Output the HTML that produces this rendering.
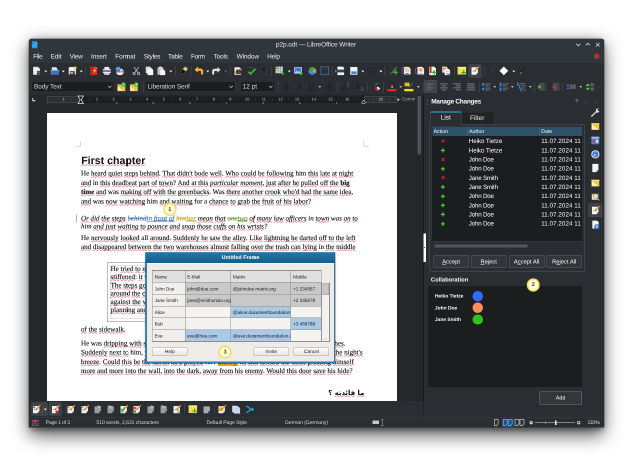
<!DOCTYPE html><html><head><meta charset="utf-8"><title>p2p.odt — LibreOffice Writer</title><style>
html,body{margin:0;padding:0;background:#fff;}
body{text-rendering:geometricPrecision;width:640px;height:473px;overflow:hidden;position:relative;font-family:"Liberation Sans",sans-serif;}
#st{will-change:transform;position:absolute;left:0;top:0;width:1280px;height:946px;transform:scale(.5);transform-origin:0 0;}
#st div,#st svg{position:absolute;}
#st div div{position:absolute}
.t{white-space:nowrap;font-family:"Liberation Sans",sans-serif;}
.d{white-space:nowrap;font-family:"Liberation Serif",serif;color:#0a0a0a;-webkit-text-stroke-width:.18px;}
.d u,.h1 u,.ar u{text-decoration:underline wavy #e8202a;text-decoration-thickness:1.25px;text-underline-offset:.4px;text-decoration-skip-ink:none}
.h1{white-space:nowrap;font-family:"Liberation Sans",sans-serif;font-weight:bold;color:#111;}
.ar{white-space:nowrap;font-family:"DejaVu Sans","Liberation Sans",sans-serif;font-weight:bold;color:#111;}
.c1{color:#3465b8}.c2{color:#c9a416}.c3{color:#5a9a1f}
.del{text-decoration:line-through}.ins{text-decoration:underline}
.del u,.ins u{text-decoration:inherit}
.hl{background:#ffd500}
.yc{border-radius:50%;background:#ffffd2;box-shadow:inset 0 0 0 2.6px #f8da62, 0 0 1.5px #f8da62;text-align:center;font-size:11px;font-weight:bold;color:#3a3a3a;font-family:"Liberation Sans",sans-serif;}
#win{left:58px;top:78px;width:1150px;height:776px;background:#2a2e32;border-radius:5px 5px 0 0;box-shadow:0 0 0 1px rgba(20,22,24,.5);}
#sh{left:63px;top:80px;width:1140px;height:774px;border-radius:5px 5px 0 0;box-shadow:0 12px 36px 4px rgba(0,0,0,.66), 0 3px 12px 3px rgba(0,0,0,.38);}
</style></head><body><div id="st"><div id="sh"></div><div id="win"></div>
<div style="left:58px;top:78px;width:1150px;height:47.8px;background:#31363b;border-radius:5px 5px 0 0"></div><svg class="i" style="left:62.1px;top:81.7px;" width="15" height="15" viewBox="0 0 16 16"><path d="M2 0.500h8l4 4V15.500H2z" fill="#1e9be8"/><path d="M10 .5v4h4z" fill="#8fd0fa"/><path d="M4.500 7h7M4.500 9.500h7M4.500 12h5" stroke="#5fbaf2" stroke-width="1"/></svg><div class="t" style="left:551.8px;top:80.95px;font-size:13px;line-height:16.9px;color:#e6e7e8;letter-spacing:-0.14px;">p2p.odt — LibreOffice Writer</div><svg class="i" style="left:1149.9px;top:82.7px;" width="13" height="13" viewBox="0 0 16 16"><path d="M3 5.500l5 5 5-5" fill="none" stroke="#fcfcfc" stroke-width="1.600"/></svg><svg class="i" style="left:1169.3px;top:82.3px;" width="13" height="13" viewBox="0 0 16 16"><path d="M3 10.500l5-5 5 5" fill="none" stroke="#fcfcfc" stroke-width="1.600"/></svg><svg class="i" style="left:1188.5px;top:82.5px;" width="13" height="13" viewBox="0 0 16 16"><path d="M3.500 3.500l9 9M12.500 3.500l-9 9" fill="none" stroke="#fcfcfc" stroke-width="1.600"/></svg><div class="t" style="left:66.6px;top:104.95px;font-size:13px;line-height:16.9px;color:#eeeff0;letter-spacing:-0.78px;">File</div><div class="t" style="left:101.5px;top:104.95px;font-size:13px;line-height:16.9px;color:#eeeff0;letter-spacing:-0.3px;">Edit</div><div class="t" style="left:139.2px;top:104.95px;font-size:13px;line-height:16.9px;color:#eeeff0;letter-spacing:-0.51px;">View</div><div class="t" style="left:182px;top:104.95px;font-size:13px;line-height:16.9px;color:#eeeff0;letter-spacing:-0.18px;">Insert</div><div class="t" style="left:230.6px;top:104.95px;font-size:13px;line-height:16.9px;color:#eeeff0;letter-spacing:-0.25px;">Format</div><div class="t" style="left:287.8px;top:104.95px;font-size:13px;line-height:16.9px;color:#eeeff0;letter-spacing:-0.48px;">Styles</div><div class="t" style="left:336px;top:104.95px;font-size:13px;line-height:16.9px;color:#eeeff0;letter-spacing:-0.37px;">Table</div><div class="t" style="left:382px;top:104.95px;font-size:13px;line-height:16.9px;color:#eeeff0;letter-spacing:-0.78px;">Form</div><div class="t" style="left:427.6px;top:104.95px;font-size:13px;line-height:16.9px;color:#eeeff0;letter-spacing:-0.49px;">Tools</div><div class="t" style="left:473.2px;top:104.95px;font-size:13px;line-height:16.9px;color:#eeeff0;letter-spacing:-0.29px;">Window</div><div class="t" style="left:534.2px;top:104.95px;font-size:13px;line-height:16.9px;color:#eeeff0;letter-spacing:-0.31px;">Help</div><svg class="i" style="left:1187.1px;top:106.1px;" width="13" height="13" viewBox="0 0 16 16"><circle cx="8" cy="8" r="6" fill="#d8353f"/><path d="M5.500 5.500l5 5M10.500 5.500l-5 5" stroke="#7d1a20" stroke-width="1.500"/></svg><div style="left:58px;top:125.8px;width:1150px;height:62.8px;background:#2a2e32"></div><div style="left:936.6px;top:129.2px;width:26px;height:25.6px;background:#3d4247;border-radius:3px;box-shadow:inset 0 0 0 1px #50555a"></div><svg class="i" style="left:63.9px;top:132.1px;" width="19.4" height="19.4" viewBox="0 0 16 16"><path d="M2 1.5h8l3 3v10h-11z" fill="#f4f4f4"/><path d="M10 1.5v3h3z" fill="#c9c9c9"/><rect x="2" y="1.500" width="8" height="2" fill="#cfe3f7"/><rect x="8" y="8" width="5" height="6" fill="#2b2f33"/><rect x="9" y="9.5" width="3" height="1.3" fill="#f7d847"/></svg><svg class="i" style="left:99.5px;top:132.1px;" width="19.4" height="19.4" viewBox="0 0 16 16"><path d="M3 2h7l2 2v5H3z" fill="#e9e9e9"/><path d="M1 6.5h14v8H1z" fill="#3f73c4"/><path d="M1 6.5h14v1.6H1z" fill="#7aa7e6"/></svg><svg class="i" style="left:134.9px;top:132.1px;" width="19.4" height="19.4" viewBox="0 0 16 16"><path d="M2 2h12v12H2z" fill="#e6e6e6"/><rect x="4" y="8.5" width="8" height="5.5" fill="#3c4045"/><rect x="5" y="10" width="4" height="2.6" fill="#d0d0d0"/><rect x="4" y="2" width="7" height="4" fill="#fbfbfb"/><circle cx="12.5" cy="3.2" r="2.4" fill="#f7d847"/></svg><svg class="i" style="left:178.3px;top:132.1px;" width="19.4" height="19.4" viewBox="0 0 16 16"><path d="M2 1h9l3 3v11H2z" fill="#d42218"/><path d="M11 1v3h3z" fill="#f6a09a"/><path d="M10.5 2.5L6.5 8.5h2.6L6 14.5l6.4-7.6H9.6z" fill="#f9d648"/></svg><svg class="i" style="left:203.5px;top:132.1px;" width="19.4" height="19.4" viewBox="0 0 16 16"><rect x="4" y="1.5" width="8" height="4" fill="#f1f1f1"/><rect x="1.5" y="5" width="13" height="7" rx="1" fill="#e2e2e2"/><rect x="1.5" y="7" width="13" height="2.6" fill="#8c45b4"/><rect x="4" y="10.5" width="8" height="4.2" fill="#fbfbfb"/><path d="M5 12h6M5 13.4h6" stroke="#9a9a9a" stroke-width=".7"/></svg><svg class="i" style="left:228.9px;top:132.1px;" width="19.4" height="19.4" viewBox="0 0 16 16"><rect x="5" y="4.5" width="8" height="3" fill="#f1f1f1"/><rect x="2.5" y="7" width="13" height="5.5" rx="1" fill="#dcdcdc"/><rect x="2.5" y="8.6" width="13" height="2" fill="#8c45b4"/><rect x="5" y="11" width="8" height="3.8" fill="#fbfbfb"/><circle cx="6" cy="5.3" r="4.2" fill="#3d86d8"/><path d="M3 4.2c2 1 4-1.2 5.8.4" stroke="#a7d2ff" stroke-width="1.1" fill="none"/><path d="M9 8.6l3 3" stroke="#d5d5d5" stroke-width="1.6"/></svg><svg class="i" style="left:262.9px;top:132.1px;" width="19.4" height="19.4" viewBox="0 0 16 16"><path d="M4 1.5L10.8 11M12 1.5L5.2 11" stroke="#c9cbcd" stroke-width="1.2" fill="none"/><circle cx="4.2" cy="12.6" r="1.9" fill="none" stroke="#c9cbcd" stroke-width="1.2"/><circle cx="11.8" cy="12.6" r="1.9" fill="none" stroke="#c9cbcd" stroke-width="1.2"/></svg><svg class="i" style="left:288.7px;top:132.1px;" width="19.4" height="19.4" viewBox="0 0 16 16"><path d="M2 1h7l2 2v9H2z" fill="#d9d9d9"/><path d="M5 4h7l2.4 2.4V15H5z" fill="#f6f6f6"/></svg><svg class="i" style="left:312.9px;top:132.1px;" width="19.4" height="19.4" viewBox="0 0 16 16"><rect x="1.5" y="2.5" width="10" height="12" rx="1" fill="#bdbfc1"/><rect x="4" y="1" width="5" height="3" rx=".8" fill="#e9e9e9"/><path d="M6 6h6l2.4 2.4V15H6z" fill="#f7f7f7"/></svg><svg class="i" style="left:357.5px;top:132.1px;" width="19.4" height="19.4" viewBox="0 0 16 16"><path d="M9.5 1.2l5 4.2-3.6 3.4-4.8-4z" fill="#e6c98a"/><path d="M6 4.8l4.9 4-5.2 5.6-4.4-3.6z" fill="#15171a" stroke="#6b6f73" stroke-width=".6"/><path d="M11 .8l4 3.5" stroke="#c58d2d" stroke-width="1.2"/></svg><svg class="i" style="left:387.9px;top:132.1px;" width="19.4" height="19.4" viewBox="0 0 16 16"><path d="M1 6.2L6.4 1.6v3h4.2c2.6 0 4.4 1.8 4.4 4.4V14h-3.4V9.6c0-.9-.5-1.4-1.4-1.4H6.4v3z" fill="#f5b11c"/><path d="M1 6.2L6.4 1.6v3h4.2c2.6 0 4.4 1.8 4.4 4.4" fill="none" stroke="#ffe08a" stroke-width=".6"/></svg><svg class="i" style="left:422.9px;top:132.1px;" width="19.4" height="19.4" viewBox="0 0 16 16"><path d="M15 6.2L9.6 1.6v3H5.4C2.8 4.6 1 6.400 1 9V14h3.400V9.600c0-.9.500-1.400 1.400-1.400H9.600v3z" fill="#dfe1e3"/></svg><svg class="i" style="left:466.3px;top:132.1px;" width="19.4" height="19.4" viewBox="0 0 16 16"><path d="M2.500 2h8l3 3v9.500h-11z" fill="#f1eee6"/><circle cx="7" cy="10.500" r="2.700" fill="#2a2320"/><circle cx="11.500" cy="10.500" r="2.700" fill="#2a2320"/><circle cx="7" cy="10.500" r="1.200" fill="#c0691f"/><circle cx="11.500" cy="10.500" r="1.200" fill="#c0691f"/><path d="M6 5.500h3l1 2.500H5z" fill="#4a3a30"/><path d="M10 5.500h2.500l1 2.500H9.500z" fill="#4a3a30"/></svg><svg class="i" style="left:494.1px;top:132.1px;" width="19.4" height="19.4" viewBox="0 0 16 16"><path d="M2.500 9.500l3.500 3.700L14 4.200" fill="none" stroke="#3cc43c" stroke-width="2.600"/><path d="M3 2.200h7" stroke="#8a8d90" stroke-width=".8" stroke-dasharray="1.600 1"/></svg><svg class="i" style="left:519.5px;top:132.1px;" width="19.4" height="19.4" viewBox="0 0 16 16"><path d="M6 2h7v1.800h-1.400V14H10V3.800H8.800V14H7.200V8.600C4.800 8.600 3.400 7.200 3.400 5.300S4.800 2 6 2z" fill="#121416" stroke="#565a5e" stroke-width=".5"/></svg><svg class="i" style="left:549.9px;top:132.1px;" width="19.4" height="19.4" viewBox="0 0 16 16"><rect x="1" y="1" width="12" height="11" fill="#d7d9db"/><path d="M1 4.500h12M1 8h12M5 1v11M9 1v11" stroke="#7d8185" stroke-width=".8"/><rect x="1" y="1" width="4" height="3.500" fill="#7db35c"/><path d="M11.500 8v3.500H9l3.500 4 3.500-4h-2.500V8z" fill="#2fb52f"/></svg><svg class="i" style="left:586.9px;top:132.1px;" width="19.4" height="19.4" viewBox="0 0 16 16"><rect x="1" y="2" width="13" height="10.500" fill="#e9e9e9"/><rect x="2" y="3" width="11" height="8.500" fill="#3e7fd6"/><path d="M2 11.500l3.500-4 2.500 2.500 2-1.800 3 3.300z" fill="#9ccdf7"/><path d="M11.500 8.500V12H9l3.500 3.800L16 12h-2.500V8.500z" fill="#2fb52f"/></svg><svg class="i" style="left:614.9px;top:132.1px;" width="19.4" height="19.4" viewBox="0 0 16 16"><circle cx="8" cy="8.500" r="6.500" fill="#3a78c9"/><path d="M8 8.500L3 4.200A6.500 6.500 0 0 1 12.300 3.600z" fill="#35b035"/><path d="M8 8.500l4.300-4.900A6.500 6.500 0 0 1 13.500 12z" fill="#f08a2c"/><path d="M1.700 10h12.600" stroke="#8db9ea" stroke-width="1"/></svg><svg class="i" style="left:640.3px;top:132.1px;" width="19.4" height="19.4" viewBox="0 0 16 16"><rect x="1.500" y="1.500" width="13" height="13" fill="#2a2e32" stroke="#4a86d8" stroke-width="1"/><path d="M4.500 4h7v2h-1V5.200H8.800v6H10V12H6v-.8h1.200v-6H5.500V6h-1z" fill="#15171a" stroke="#5d6165" stroke-width=".4"/></svg><svg class="i" style="left:670.3px;top:132.1px;" width="19.4" height="19.4" viewBox="0 0 16 16"><path d="M4 1h9l2 2v3H4z" fill="#f4f4f4"/><rect x="4" y="10.500" width="11" height="4.500" fill="#f4f4f4"/><path d="M2 8.300h13" stroke="#3b8be0" stroke-width="1.300" stroke-dasharray="2.200 1"/><path d="M0 5.800l3.600 2.500L0 10.800z" fill="#3b8be0"/></svg><svg class="i" style="left:698.3px;top:132.1px;" width="19.4" height="19.4" viewBox="0 0 16 16"><rect x="2" y="1.500" width="12" height="13" fill="#e4e4e4"/><rect x="3.500" y="3" width="9" height="4" fill="#fbfbfb"/><rect x="4" y="9" width="8.500" height="4" fill="#3b7fe6"/></svg><svg class="i" style="left:734.3px;top:132.1px;" width="19.4" height="19.4" viewBox="0 0 16 16"><path d="M2.500 13.500h4v-1.700C4.800 10.800 3.900 9.300 3.900 7.400 3.900 4.900 5.500 3.200 8 3.200s4.100 1.700 4.100 4.200c0 1.900-.9 3.400-2.600 4.400v1.700h4" fill="none" stroke="#15171a" stroke-width="1.700"/><path d="M2.500 13.500h4v-1.700C4.800 10.800 3.900 9.300 3.900 7.400 3.900 4.900 5.500 3.200 8 3.200s4.100 1.700 4.100 4.200c0 1.900-.9 3.400-2.600 4.400v1.700h4" fill="none" stroke="#4d5155" stroke-width=".5"/></svg><svg class="i" style="left:777.5px;top:132.1px;" width="19.4" height="19.4" viewBox="0 0 16 16"><path d="M2 13.500C5 12 8 8 12.500 1.500" stroke="#7f8387" stroke-width="1.600" fill="none"/><path d="M3 12.500c3.500-.5 6-3 9-9" stroke="#44484c" stroke-width="1" fill="none"/><path d="M11.500 8v3H8.500v2h3v3h2v-3h3v-2h-3V8z" fill="#2fb52f" transform="translate(-1.500 -1.500)"/></svg><svg class="i" style="left:802.9px;top:132.1px;" width="19.4" height="19.4" viewBox="0 0 16 16"><path d="M4 1.500h8l3 3V14H4z" fill="#f1f1f1"/><rect x="6" y="4" width="7" height="5.500" fill="#f08a2c" opacity=".8"/><path d="M6 5.300h7M6 6.800h7M6 8.300h7" stroke="#f7f7f7" stroke-width=".6"/><path d="M5 2.500H2.300C1.400 2.500 1 3 1 4v7c0 1 .4 1.500 1.300 1.500H5" fill="none" stroke="#7b57c9" stroke-width="1.300"/><rect x="7" y="11.500" width="5" height="2" fill="#3b7fe6"/></svg><svg class="i" style="left:830.3px;top:132.1px;" width="19.4" height="19.4" viewBox="0 0 16 16"><path d="M4 1.500h8l3 3V14H4z" fill="#f1f1f1"/><rect x="6.500" y="4" width="6" height="5" fill="#f3a25a"/><path d="M5 3.500H2.300C1.400 3.500 1 4 1 5v6c0 1 .4 1.500 1.300 1.500H5" fill="none" stroke="#7b57c9" stroke-width="1.300"/><rect x="7" y="11.800" width="5" height="1.600" fill="#8db2ee"/></svg><svg class="i" style="left:855.1px;top:132.1px;" width="19.4" height="19.4" viewBox="0 0 16 16"><path d="M3 1h8l3 3v11H3z" fill="#f4f4f4"/><rect x="4" y="0.500" width="2.600" height="11" fill="#d32218"/><path d="M11.500 8v3H8.500v2h3v3h2v-3h3v-2h-3V8z" fill="#2fb52f" transform="translate(-1.500 -1.500)"/></svg><svg class="i" style="left:881.5px;top:132.1px;" width="19.4" height="19.4" viewBox="0 0 16 16"><path d="M2 1h7l2 2v8H2z" fill="#e1e1e1"/><rect x="3.500" y="3" width="5" height="4" fill="#f08a2c"/><path d="M6 5h7l2 2v8H6z" fill="#f7f7f7"/><rect x="8" y="8" width="5" height="2" fill="#c9c9c9"/><path d="M9 12.500l4 2" stroke="#7b57c9" stroke-width="1.500"/><circle cx="13.500" cy="13.500" r="1.600" fill="#3b7fe6"/></svg><svg class="i" style="left:914.3px;top:132.1px;" width="19.4" height="19.4" viewBox="0 0 16 16"><rect x="1" y="1.500" width="14" height="12.500" fill="#f9de55"/><rect x="1" y="1.500" width="14" height="2" fill="#fff09a"/><path d="M11.500 8v3H8.500v2h3v3h2v-3h3v-2h-3V8z" fill="#2fb52f" transform="translate(-1.500 -1.200)"/></svg><svg class="i" style="left:939.9px;top:132.1px;" width="19.4" height="19.4" viewBox="0 0 16 16"><path d="M2.500 2h10.500v9l-3 3.500H2.500z" fill="#f7f7f7"/><path d="M13 11h-3v3.500z" fill="#cfcfcf"/><path d="M4 8.500h6" stroke="#e35d1d" stroke-width="1"/><path d="M8.5 7.5L14.2 1.5" stroke="#f08a2c" stroke-width="2.2" stroke-linecap="round"/><path d="M7.3 8.7l2.2 -.6l-1.6 -1.6z" fill="#5a4020"/></svg><svg class="i" style="left:973.1px;top:132.1px;" width="19.4" height="19.4" viewBox="0 0 16 16"><path d="M2 14L14 2" stroke="#3f4347" stroke-width="1.100"/></svg><svg class="i" style="left:998.3px;top:132.1px;" width="19.4" height="19.4" viewBox="0 0 16 16"><path d="M8 .8L15.200 8 8 15.200.8 8z" fill="#fafafa"/></svg><svg class="i" style="left:1036.3px;top:132.1px;" width="19.4" height="19.4" viewBox="0 0 16 16"><path d="M13.500 1.500L5 11" stroke="#15171a" stroke-width="2.200"/><path d="M14 2L5.500 11.500" stroke="#5b5f63" stroke-width=".5"/><path d="M5.200 10.200L2 14l4.300-2.600z" fill="#e6c36a"/></svg><svg class="i" style="left:85.4px;top:135.8px;" width="13.2" height="13.2" viewBox="0 0 16 16"><path d="M4.5 6.5h7L8 10.5z" fill="#fcfcfc"/></svg><svg class="i" style="left:120.4px;top:135.8px;" width="13.2" height="13.2" viewBox="0 0 16 16"><path d="M4.5 6.5h7L8 10.5z" fill="#fcfcfc"/></svg><svg class="i" style="left:155.8px;top:135.8px;" width="13.2" height="13.2" viewBox="0 0 16 16"><path d="M4.5 6.5h7L8 10.5z" fill="#fcfcfc"/></svg><svg class="i" style="left:335.4px;top:135.8px;" width="13.2" height="13.2" viewBox="0 0 16 16"><path d="M4.5 6.5h7L8 10.5z" fill="#fcfcfc"/></svg><svg class="i" style="left:409.4px;top:135.8px;" width="13.2" height="13.2" viewBox="0 0 16 16"><path d="M4.5 6.5h7L8 10.5z" fill="#fcfcfc"/></svg><svg class="i" style="left:572.2px;top:135.8px;" width="13.2" height="13.2" viewBox="0 0 16 16"><path d="M4.5 6.5h7L8 10.5z" fill="#fcfcfc"/></svg><svg class="i" style="left:719.4px;top:135.8px;" width="13.2" height="13.2" viewBox="0 0 16 16"><path d="M4.5 6.5h7L8 10.5z" fill="#fcfcfc"/></svg><svg class="i" style="left:755.4px;top:135.8px;" width="13.2" height="13.2" viewBox="0 0 16 16"><path d="M4.5 6.5h7L8 10.5z" fill="#fcfcfc"/></svg><svg class="i" style="left:1021px;top:135.8px;" width="13.2" height="13.2" viewBox="0 0 16 16"><path d="M4.5 6.5h7L8 10.5z" fill="#fcfcfc"/></svg><svg class="i" style="left:445.4px;top:135.8px;" width="13.2" height="13.2" viewBox="0 0 16 16"><path d="M4.5 6.5h7L8 10.5z" fill="#6a6e72"/></svg><div style="left:169.6px;top:132px;width:1px;height:20px;background:#4b5055"></div><div style="left:255.4px;top:132px;width:1px;height:20px;background:#4b5055"></div><div style="left:350px;top:132px;width:1px;height:20px;background:#4b5055"></div><div style="left:383.4px;top:132px;width:1px;height:20px;background:#4b5055"></div><div style="left:461px;top:132px;width:1px;height:20px;background:#4b5055"></div><div style="left:543.4px;top:132px;width:1px;height:20px;background:#4b5055"></div><div style="left:664px;top:132px;width:1px;height:20px;background:#4b5055"></div><div style="left:769.4px;top:132px;width:1px;height:20px;background:#4b5055"></div><div style="left:907.6px;top:132px;width:1px;height:20px;background:#4b5055"></div><div style="left:967.6px;top:132px;width:1px;height:20px;background:#4b5055"></div><div style="left:62.8px;top:162.2px;width:165.2px;height:22px;background:#1b1e20;border-radius:3px;box-shadow:inset 0 0 0 1px #3a3e42"></div><div class="t" style="left:68px;top:164.95px;font-size:13px;line-height:16.9px;color:#d9dbdd;letter-spacing:-0.18px;">Body Text</div><svg class="i" style="left:213.9px;top:167.9px;" width="11" height="11" viewBox="0 0 16 16"><path d="M3 5.500l5 5 5-5" fill="none" stroke="#d5d7d9" stroke-width="1.700"/></svg><svg class="i" style="left:232.7px;top:163.7px;" width="19.4" height="19.4" viewBox="0 0 16 16"><path d="M1.500 4h10l3 3v8h-13z" fill="#f2c83a"/><path d="M2.500 6l9 8h-9z" fill="#fbf3cf"/><path d="M2.500 6l9 8" stroke="#b88a14" stroke-width=".7"/><circle cx="11.500" cy="4.500" r="3.800" fill="#2fb52f"/><path d="M9.600 4.500a2 2 0 0 1 3.600-1.100M13.400 4.600a2 2 0 0 1-3.600 1.100" stroke="#eaffea" stroke-width=".9" fill="none"/></svg><svg class="i" style="left:258.3px;top:163.7px;" width="19.4" height="19.4" viewBox="0 0 16 16"><path d="M1.500 4h10l3 3v8h-13z" fill="#f2c83a"/><path d="M2.500 6l9 8h-9z" fill="#fbf3cf"/><path d="M2.500 6l9 8" stroke="#b88a14" stroke-width=".7"/><circle cx="12" cy="4" r="3.600" fill="#2fb52f"/><path d="M10 4h4M12 2v4" stroke="#eaffea" stroke-width="1.200"/></svg><div style="left:286px;top:164px;width:1px;height:20px;background:#4b5055"></div><div style="left:290px;top:162.2px;width:180.8px;height:22px;background:#1b1e20;border-radius:3px;box-shadow:inset 0 0 0 1px #3a3e42"></div><div class="t" style="left:295.2px;top:164.95px;font-size:13px;line-height:16.9px;color:#d9dbdd;letter-spacing:-0.2px;">Liberation Serif</div><svg class="i" style="left:456.7px;top:167.9px;" width="11" height="11" viewBox="0 0 16 16"><path d="M3 5.500l5 5 5-5" fill="none" stroke="#d5d7d9" stroke-width="1.700"/></svg><div style="left:480px;top:162.2px;width:70px;height:22px;background:#1b1e20;border-radius:3px;box-shadow:inset 0 0 0 1px #3a3e42"></div><div class="t" style="left:485.2px;top:164.95px;font-size:13px;line-height:16.9px;color:#d9dbdd;letter-spacing:0.02px;">12 pt</div><svg class="i" style="left:535.9px;top:167.9px;" width="11" height="11" viewBox="0 0 16 16"><path d="M3 5.500l5 5 5-5" fill="none" stroke="#d5d7d9" stroke-width="1.700"/></svg><div style="left:847.6px;top:160.4px;width:26.4px;height:26px;background:#3d4247;border-radius:3px;box-shadow:inset 0 0 0 1px #50555a"></div><svg class="i" style="left:562.3px;top:163.7px;" width="19.4" height="19.4" viewBox="0 0 16 16"><path d="M4 2h5c2.200 0 3.500 1.100 3.500 2.900 0 1.300-.7 2.200-1.800 2.600 1.500.3 2.400 1.400 2.400 2.900 0 2.100-1.500 3.400-4 3.400H4v-1h1.200V3H4zM7.600 3v4h1c1.100 0 1.700-.8 1.700-2s-.6-2-1.700-2zM7.600 8v4.800h1.200c1.300 0 2-.9 2-2.400S10.100 8 8.800 8z" fill="#1e2124"/></svg><svg class="i" style="left:587.9px;top:163.7px;" width="19.4" height="19.4" viewBox="0 0 16 16"><path d="M7 2h5.500l-.2 1h-1.600L8.500 13H10l-.2 1H4.300l.2-1h1.600L8.300 3H6.800z" fill="#1e2124"/></svg><svg class="i" style="left:613.3px;top:163.7px;" width="19.4" height="19.4" viewBox="0 0 16 16"><path d="M3 2h4.500v1H6.300v6c0 1.700.7 2.500 2.100 2.500s2.300-.9 2.300-2.600V3H9.500V2H13v1h-1.200v6c0 2.300-1.300 3.500-3.600 3.500S4.200 11.400 4.200 9.100V3H3z" fill="#1e2124"/><rect x="2" y="14" width="12" height="1.200" fill="#1e2124"/></svg><svg class="i" style="left:650.3px;top:163.7px;" width="19.4" height="19.4" viewBox="0 0 16 16"><path d="M11.800 5.200C11.600 3.400 10.300 2.500 8.300 2.500 6.200 2.500 4.800 3.600 4.800 5.300c0 3.600 7 1.700 7 5.400 0 1.700-1.400 2.800-3.600 2.800S4.500 12.400 4.300 10.500" fill="none" stroke="#1e2124" stroke-width="1.500"/><rect x="1.500" y="7.600" width="13" height="1.300" fill="#1e2124"/></svg><svg class="i" style="left:681.1px;top:163.7px;" width="19.4" height="19.4" viewBox="0 0 16 16"><path d="M2 6l7 9M9 6l-7 9" stroke="#1e2124" stroke-width="1.600"/><path d="M11 3c0-1.300 3-1.300 3 .2 0 1.200-3 2-3 3.800h3.200" fill="none" stroke="#2c5fb4" stroke-width="1.200"/></svg><svg class="i" style="left:708.9px;top:163.7px;" width="19.4" height="19.4" viewBox="0 0 16 16"><path d="M2 2l7 9M9 2l-7 9" stroke="#1e2124" stroke-width="1.600"/><path d="M11 10c0-1.300 3-1.300 3 .2 0 1.200-3 2-3 3.800h3.200" fill="none" stroke="#2c5fb4" stroke-width="1.200"/></svg><svg class="i" style="left:742.9px;top:163.7px;" width="19.4" height="19.4" viewBox="0 0 16 16"><path d="M9 1.500l-3 8" stroke="#5a5e62" stroke-width="1.200"/><path d="M4 2.500h8" stroke="#5a5e62" stroke-width="1.200"/><path d="M10.500 7.500l4 3.500-4.500 4-4-3.500z" fill="#f3f3f3"/><path d="M8.300 9.500l4 3.500-2.300 2-4-3.500z" fill="#e0281e"/></svg><svg class="i" style="left:773.9px;top:163.7px;" width="19.4" height="19.4" viewBox="0 0 16 16"><path d="M2 10.500L8 .5l6 10h-2.600L8 4.500 4.600 10.500z" fill="#14161a"/><path d="M4.500 9.500L8 2.500l1.800 3.500z" fill="#d33"/><path d="M8 2.500l3.500 7H8.500z" fill="#8a4fc0"/><path d="M5.500 9.500h5l-1.200-2.500z" fill="#e8a21c"/><rect x=".5" y="11.500" width="15" height="3.800" fill="#e0281e"/></svg><svg class="i" style="left:807.9px;top:163.7px;" width="19.4" height="19.4" viewBox="0 0 16 16"><rect x="1" y="1" width="8" height="6" fill="#f3d21a"/><path d="M2.500 3h5M2.500 5h3" stroke="#8d7a10" stroke-width=".8"/><path d="M14.500 1.500L8 9" stroke="#3672c9" stroke-width="1.500"/><path d="M8 8.500l-1.500 2.300 2.400-1.300z" fill="#1d1d1d"/><rect x=".5" y="11.500" width="15" height="3.800" fill="#f5e600"/></svg><svg class="i" style="left:851.1px;top:163.7px;" width="19.4" height="19.4" viewBox="0 0 16 16"><path d="M1.500 3h13M1.500 6.300h8M1.500 9.600h13M1.500 12.900h8" stroke="#585c60" stroke-width="2.500"/></svg><svg class="i" style="left:877.5px;top:163.7px;" width="19.4" height="19.4" viewBox="0 0 16 16"><path d="M1.500 3h13M4 6.300h8M1.500 9.600h13M4 12.900h8" stroke="#585c60" stroke-width="2.500"/></svg><svg class="i" style="left:904.3px;top:163.7px;" width="19.4" height="19.4" viewBox="0 0 16 16"><path d="M1.500 3h13M6.500 6.300h8M1.500 9.600h13M6.500 12.900h8" stroke="#585c60" stroke-width="2.500"/></svg><svg class="i" style="left:932.3px;top:163.7px;" width="19.4" height="19.4" viewBox="0 0 16 16"><path d="M1.500 3h13M1.500 6.300h13M1.500 9.600h13M1.500 12.900h13" stroke="#585c60" stroke-width="2.500"/></svg><svg class="i" style="left:962.9px;top:163.7px;" width="19.4" height="19.4" viewBox="0 0 16 16"><path d="M6 3.200h9.500M6 6.200h7M6 10.200h9.500M6 13.200h7" stroke="#585c60" stroke-width="2.300"/><rect x=".8" y="2" width="3.600" height="4" fill="#3b7fe6"/><rect x=".8" y="9.500" width="3.600" height="4" fill="#3b7fe6"/></svg><svg class="i" style="left:997.5px;top:163.7px;" width="19.4" height="19.4" viewBox="0 0 16 16"><path d="M6 3.200h9.500M6 6.200h7M6 10.200h9.500M6 13.200h7" stroke="#585c60" stroke-width="2.300"/><rect x="1" y="1" width="3.200" height="6" fill="#3b7fe6"/><rect x="1" y="9" width="3.200" height="6" fill="#3b7fe6"/></svg><svg class="i" style="left:1033.1px;top:163.7px;" width="19.4" height="19.4" viewBox="0 0 16 16"><path d="M5 2.800h9.500M8 6.500h7.500M8 10h6M10.500 13.500h5" stroke="#585c60" stroke-width="2.300"/><path d="M2.200 .8v5.500M5.200 5.500v5.500M7.400 10.500v5" stroke="#3b7fe6" stroke-width="2.300"/></svg><svg class="i" style="left:1073.7px;top:163.7px;" width="19.4" height="19.4" viewBox="0 0 16 16"><rect x="4" y="1.500" width="11" height="13" fill="#4a4e52"/><rect x="11" y="1.500" width="4" height="13" fill="#3c4044"/><path d="M2 4.500l5.500 3.500L2 11.500z" fill="#4fc81f"/></svg><svg class="i" style="left:1101.1px;top:163.7px;" width="19.4" height="19.4" viewBox="0 0 16 16"><rect x="4" y="1.500" width="11" height="13" fill="#4a4e52"/><rect x="11" y="1.500" width="4" height="13" fill="#3c4044"/><path d="M8 4.500L2.500 8 8 11.500z" fill="#e0281e"/></svg><svg class="i" style="left:1133.1px;top:163.7px;" width="19.4" height="19.4" viewBox="0 0 16 16"><rect x="5.500" y="4" width="10" height="7.500" fill="#585c60"/><path d="M2.500 4v8" stroke="#3b7fe6" stroke-width="1.300"/><path d="M.5 6l2-3 2 3zM.5 10l2 3 2-3z" fill="#3b7fe6"/></svg><svg class="i" style="left:1169.5px;top:163.7px;" width="19.4" height="19.4" viewBox="0 0 16 16"><rect x="8.500" y="2" width="6.500" height="5" fill="#585c60"/><rect x="8.500" y="9" width="6.500" height="5" fill="#585c60"/><path d="M1 6.500L4.500 2 8 6.500zM1 9.500L4.500 14 8 9.500z" fill="#5fc12f"/></svg><svg class="i" style="left:633.4px;top:167.4px;" width="13.2" height="13.2" viewBox="0 0 16 16"><path d="M4.5 6.5h7L8 10.5z" fill="#c9cbcd"/></svg><svg class="i" style="left:794.8px;top:167.4px;" width="13.2" height="13.2" viewBox="0 0 16 16"><path d="M4.5 6.5h7L8 10.5z" fill="#c9cbcd"/></svg><svg class="i" style="left:830.4px;top:167.4px;" width="13.2" height="13.2" viewBox="0 0 16 16"><path d="M4.5 6.5h7L8 10.5z" fill="#c9cbcd"/></svg><svg class="i" style="left:982.8px;top:167.4px;" width="13.2" height="13.2" viewBox="0 0 16 16"><path d="M4.5 6.5h7L8 10.5z" fill="#c9cbcd"/></svg><svg class="i" style="left:1018.4px;top:167.4px;" width="13.2" height="13.2" viewBox="0 0 16 16"><path d="M4.5 6.5h7L8 10.5z" fill="#c9cbcd"/></svg><svg class="i" style="left:1054px;top:167.4px;" width="13.2" height="13.2" viewBox="0 0 16 16"><path d="M4.5 6.5h7L8 10.5z" fill="#c9cbcd"/></svg><svg class="i" style="left:1155px;top:167.4px;" width="13.2" height="13.2" viewBox="0 0 16 16"><path d="M4.5 6.5h7L8 10.5z" fill="#c9cbcd"/></svg><div style="left:556px;top:164px;width:1px;height:20px;background:#4b5055"></div><div style="left:674px;top:164px;width:1px;height:20px;background:#4b5055"></div><div style="left:735px;top:164px;width:1px;height:20px;background:#4b5055"></div><div style="left:766px;top:164px;width:1px;height:20px;background:#4b5055"></div><div style="left:845.6px;top:164px;width:1px;height:20px;background:#4b5055"></div><div style="left:958px;top:164px;width:1px;height:20px;background:#4b5055"></div><div style="left:1067.6px;top:164px;width:1px;height:20px;background:#4b5055"></div><div style="left:1125px;top:164px;width:1px;height:20px;background:#4b5055"></div><div class="t" style="left:1198.6px;top:164.3px;font-size:14px;line-height:18.2px;color:#44484c;transform:translateX(-50%);">»</div>
<div style="left:58px;top:189.2px;width:789px;height:613.2px;background:#25292c"></div><div style="left:94px;top:226px;width:700px;height:576.4px;background:#fff"></div><div style="left:150.8px;top:292px;width:10.8px;height:1px;background:#bcbcbc"></div><div style="left:160.6px;top:281.6px;width:1px;height:11.4px;background:#bcbcbc"></div><div style="left:727.2px;top:292px;width:10.8px;height:1px;background:#bcbcbc"></div><div style="left:727.2px;top:281.6px;width:1px;height:11.4px;background:#bcbcbc"></div><div class="h1" style="left:162.4px;top:307.6px;font-size:21.2px;line-height:28px"><u>First</u> <u>chapter</u></div><div class="d" style="left:162px;top:339.42px;font-size:14.04px;line-height:16.15px;">He <u>heard</u> <u>quiet</u> <u>steps</u> <u>behind</u>. <u>That</u> <u>didn't</u> <u>bode</u> <u>well</u>. <u>Who</u> <u>could</u> <u>be</u> <u>following</u> him <u>this</u> <u>late</u> <u>at</u> <u>night</u></div><div class="d" style="left:162px;top:357.82px;font-size:14.04px;line-height:16.15px;"><u>and</u> in <u>this</u> <u>deadbeat</u> <u>part</u> <u>of</u> <u>town</u>? <u>And</u> <u>at</u> <u>this</u> <i><u>particular</u> <u>moment</u></i>, <u>just</u> <u>after</u> <u>he</u> <u>pulled</u> <u>off</u> <u>the</u> <b><u>big</u></b></div><div class="d" style="left:162px;top:376.22px;font-size:14.04px;line-height:16.15px;"><b><u>time</u></b> <u>and</u> was <u>making</u> <u>off</u> <u>with</u> <u>the</u> <u>greenbacks</u>. Was <u>there</u> <u>another</u> <u>crook</u> <u>who'd</u> <u>had</u> <u>the</u> <u>same</u> <u>idea</u>,</div><div class="d" style="left:162px;top:394.62px;font-size:14.04px;line-height:16.15px;"><u>and</u> was <u>now</u> <u>watching</u> him <u>and</u> <u>waiting</u> for a <u>chance</u> <u>to</u> <u>grab</u> <u>the</u> <u>fruit</u> <u>of</u> <u>his</u> <u>labor</u>?</div><div style="left:153px;top:429.2px;width:1.2px;height:14.8px;background:#555"></div><div class="d" style="left:162px;top:428.82px;font-size:14.04px;line-height:16.15px;font-style:italic"><u>Or</u> <u>did</u> <u>the</u> <u>steps</u> <span class="c1 del"><u>behind</u></span><span class="c1 ins">in <u>front</u> <u>of</u></span> <span class="c2 del">him</span><span class="c2 ins"><u>her</u></span> <u>mean</u> <u>that</u> <span class="c3 del"><u>one</u></span><span class="c3 ins"><u>two</u></span> <u>of</u> <u>many</u> <u>law</u> <u>officers</u> in <u>town</u> was <u>on</u> <u>to</u></div><div class="d" style="left:162px;top:445.02px;font-size:14.04px;line-height:16.15px;font-style:italic">him <u>and</u> <u>just</u> <u>waiting</u> <u>to</u> <u>pounce</u> <u>and</u> <u>snap</u> <u>those</u> <u>cuffs</u> <u>on</u> <u>his</u> <u>wrists</u>?</div><div class="d" style="left:162px;top:467.82px;font-size:14.04px;line-height:16.15px;">He <u>nervously</u> <u>looked</u> all <u>around</u>. <u>Suddenly</u> <u>he</u> <u>saw</u> <u>the</u> <u>alley</u>. <u>Like</u> <u>lightning</u> <u>he</u> <u>darted</u> <u>off</u> <u>to</u> <u>the</u> <u>left</u></div><div class="d" style="left:162px;top:486.22px;font-size:14.04px;line-height:16.15px;"><u>and</u> <u>disappeared</u> <u>between</u> <u>the</u> <u>two</u> <u>warehouses</u> <u>almost</u> <u>falling</u> <u>over</u> <u>the</u> <u>trash</u> <u>can</u> <u>lying</u> in <u>the</u> <u>middle</u></div><div style="left:214.2px;top:524.8px;width:446px;height:118.8px;border:1px solid #7a7a7a;box-sizing:border-box;background:#fff"></div><div style="left:220px;top:530.6px;width:434.4px;height:107.2px;border:1px solid #c4c4c4;box-sizing:border-box"></div><div class="d" style="left:221.2px;top:530.02px;font-size:14.04px;line-height:16.15px;">He <u>tried</u> <u>to</u> <u>nervously</u> <u>tap</u> <u>his</u> <u>way</u> <u>along</u> in <u>the</u> <u>inky</u> <u>darkness</u> <u>and</u> <u>suddenly</u></div><div class="d" style="left:221.2px;top:546.42px;font-size:14.04px;line-height:16.15px;"><u>stiffened</u>: <u>it</u> was a <u>dead-end</u>, <u>he</u> <u>would</u> <u>have</u> <u>to</u> <u>go</u> <u>back</u> <u>the</u> <u>way</u> <u>he</u> <u>had</u> <u>come</u>.</div><div class="d" style="left:221.2px;top:562.82px;font-size:14.04px;line-height:16.15px;"><u>The</u> <u>steps</u> <u>got</u> <u>louder</u> <u>and</u> <u>louder</u>, <u>he</u> <u>saw</u> a <u>black</u> <u>outline</u> <u>of</u> a <u>figure</u> <u>coming</u></div><div class="d" style="left:221.2px;top:579.22px;font-size:14.04px;line-height:16.15px;"><u>around</u> <u>the</u> <u>corner</u>. <u>Is</u> <u>this</u> <u>the</u> <u>end</u> <u>of</u> <u>the</u> <u>line</u>? <u>he</u> <u>thought</u> <u>pressing</u> <u>himself</u> <u>back</u></div><div class="d" style="left:221.2px;top:595.62px;font-size:14.04px;line-height:16.15px;"><u>against</u> <u>the</u> <u>wall</u> <u>trying</u> <u>to</u> <u>make</u> <u>himself</u> <u>invisible</u> in <u>the</u> <u>dark</u>, was all <u>that</u></div><div class="d" style="left:221.2px;top:612.02px;font-size:14.04px;line-height:16.15px;"><u>planning</u> <u>and</u> <u>energy</u> <u>wasted</u>?</div><div class="d" style="left:162px;top:651.22px;font-size:14.04px;line-height:16.15px;"><u>of</u> <u>the</u> <u>sidewalk</u>.</div><div class="d" style="left:162px;top:679.02px;font-size:14.04px;line-height:16.15px;">He was <u>dripping</u> <u>with</u> <u>sweat</u> <u>now</u>, <u>cold</u> <u>and</u> <u>wet</u>, <u>he</u> <u>could</u> <u>smell</u> <u>the</u> <u>fear</u> <u>coming</u> <u>off</u> <u>his</u> <u>clothes</u>.</div><div class="d" style="left:162px;top:697.42px;font-size:14.04px;line-height:16.15px;"><u>Suddenly</u> <u>next</u> <u>to</u> him, <u>with</u> a <u>barely</u> <u>noticeable</u> <u>squeak</u>, a <u>door</u> <u>swung</u> <u>quietly</u> <u>to</u> <u>and</u> <u>fro</u> in <u>the</u> <u>night's</u></div><div class="d" style="left:162px;top:715.82px;font-size:14.04px;line-height:16.15px;"><u>breeze</u>. <u>Could</u> <u>this</u> <u>be</u> <u>the</u> <u>haven</u> <u>he'd</u> <u>prayed</u> for? <span class="hl"><u>Slowly</u></span> <u>he</u> <u>slid</u> <u>toward</u> <u>the</u> <u>door</u>, <u>pressing</u> <u>himself</u></div><div class="d" style="left:162px;top:734.22px;font-size:14.04px;line-height:16.15px;"><u>more</u> <u>and</u> <u>more</u> <u>into</u> <u>the</u> <u>wall</u>, <u>into</u> <u>the</u> <u>dark</u>, <u>away</u> <u>from</u> <u>his</u> <u>enemy</u>. <u>Would</u> <u>this</u> <u>door</u> <u>save</u> <u>his</u> <u>hide</u>?</div><div class="ar" dir="rtl" style="left:600px;top:773.2px;width:128.8px;font-size:13.8px;line-height:26px;text-align:right"><u>ما</u> <u>فائدته</u> ؟</div><div style="left:829.4px;top:189.2px;width:17.6px;height:613.2px;background:#25282b;border-left:1px solid #2f3337;box-sizing:border-box"></div><div style="left:835px;top:192px;width:6.8px;height:117.2px;background:#4f5357;border-radius:1.700px"></div>
<div style="left:94px;top:192.6px;width:700px;height:13.2px;background:#1b1e20;border-radius:0 3px 3px 0"></div><div style="left:94px;top:192.6px;width:66.6px;height:13.2px;background:#2c3034;box-shadow:inset 0 0 0 1px #54595e"></div><div style="left:727.72px;top:192.6px;width:66.28px;height:13.2px;background:#2c3034;box-shadow:inset 0 0 0 1px #54595e;border-radius:0 3px 3px 0"></div><svg class="i" style="left:63.4px;top:194.2px;" width="10" height="10" viewBox="0 0 16 16"><path d="M4 3v9h9" fill="none" stroke="#e0e2e4" stroke-width="3"/></svg><div class="t" style="left:127.24px;top:194.2px;font-size:8px;line-height:10px;color:#c9cbcd;transform:translateX(-50%);">1</div><div style="left:143.42px;top:198.4px;width:1px;height:1.8px;background:#6a6e72"></div><div style="left:135.18px;top:198.8px;width:0.8px;height:1px;background:#4a4e52"></div><div style="left:151.86px;top:198.8px;width:0.8px;height:1px;background:#4a4e52"></div><div style="left:176.78px;top:198.4px;width:1px;height:1.8px;background:#6a6e72"></div><div style="left:168.54px;top:198.8px;width:0.8px;height:1px;background:#4a4e52"></div><div style="left:185.22px;top:198.8px;width:0.8px;height:1px;background:#4a4e52"></div><div class="t" style="left:193.96px;top:194.2px;font-size:8px;line-height:10px;color:#c9cbcd;transform:translateX(-50%);">1</div><div style="left:210.14px;top:198.4px;width:1px;height:1.8px;background:#6a6e72"></div><div style="left:201.9px;top:198.8px;width:0.8px;height:1px;background:#4a4e52"></div><div style="left:218.58px;top:198.8px;width:0.8px;height:1px;background:#4a4e52"></div><div class="t" style="left:227.32px;top:194.2px;font-size:8px;line-height:10px;color:#c9cbcd;transform:translateX(-50%);">2</div><div style="left:243.5px;top:198.4px;width:1px;height:1.8px;background:#6a6e72"></div><div style="left:235.26px;top:198.8px;width:0.8px;height:1px;background:#4a4e52"></div><div style="left:251.94px;top:198.8px;width:0.8px;height:1px;background:#4a4e52"></div><div class="t" style="left:260.68px;top:194.2px;font-size:8px;line-height:10px;color:#c9cbcd;transform:translateX(-50%);">3</div><div style="left:276.86px;top:198.4px;width:1px;height:1.8px;background:#6a6e72"></div><div style="left:268.62px;top:198.8px;width:0.8px;height:1px;background:#4a4e52"></div><div style="left:285.3px;top:198.8px;width:0.8px;height:1px;background:#4a4e52"></div><div class="t" style="left:294.04px;top:194.2px;font-size:8px;line-height:10px;color:#c9cbcd;transform:translateX(-50%);">4</div><div style="left:310.22px;top:198.4px;width:1px;height:1.8px;background:#6a6e72"></div><div style="left:301.98px;top:198.8px;width:0.8px;height:1px;background:#4a4e52"></div><div style="left:318.66px;top:198.8px;width:0.8px;height:1px;background:#4a4e52"></div><div class="t" style="left:327.4px;top:194.2px;font-size:8px;line-height:10px;color:#c9cbcd;transform:translateX(-50%);">5</div><div style="left:343.58px;top:198.4px;width:1px;height:1.8px;background:#6a6e72"></div><div style="left:335.34px;top:198.8px;width:0.8px;height:1px;background:#4a4e52"></div><div style="left:352.02px;top:198.8px;width:0.8px;height:1px;background:#4a4e52"></div><div class="t" style="left:360.76px;top:194.2px;font-size:8px;line-height:10px;color:#c9cbcd;transform:translateX(-50%);">6</div><div style="left:376.94px;top:198.4px;width:1px;height:1.8px;background:#6a6e72"></div><div style="left:368.7px;top:198.8px;width:0.8px;height:1px;background:#4a4e52"></div><div style="left:385.38px;top:198.8px;width:0.8px;height:1px;background:#4a4e52"></div><div class="t" style="left:394.12px;top:194.2px;font-size:8px;line-height:10px;color:#c9cbcd;transform:translateX(-50%);">7</div><div style="left:410.3px;top:198.4px;width:1px;height:1.8px;background:#6a6e72"></div><div style="left:402.06px;top:198.8px;width:0.8px;height:1px;background:#4a4e52"></div><div style="left:418.74px;top:198.8px;width:0.8px;height:1px;background:#4a4e52"></div><div class="t" style="left:427.48px;top:194.2px;font-size:8px;line-height:10px;color:#c9cbcd;transform:translateX(-50%);">8</div><div style="left:443.66px;top:198.4px;width:1px;height:1.8px;background:#6a6e72"></div><div style="left:435.42px;top:198.8px;width:0.8px;height:1px;background:#4a4e52"></div><div style="left:452.1px;top:198.8px;width:0.8px;height:1px;background:#4a4e52"></div><div class="t" style="left:460.84px;top:194.2px;font-size:8px;line-height:10px;color:#c9cbcd;transform:translateX(-50%);">9</div><div style="left:477.02px;top:198.4px;width:1px;height:1.8px;background:#6a6e72"></div><div style="left:468.78px;top:198.8px;width:0.8px;height:1px;background:#4a4e52"></div><div style="left:485.46px;top:198.8px;width:0.8px;height:1px;background:#4a4e52"></div><div class="t" style="left:494.2px;top:194.2px;font-size:8px;line-height:10px;color:#c9cbcd;transform:translateX(-50%);">10</div><div style="left:510.38px;top:198.4px;width:1px;height:1.8px;background:#6a6e72"></div><div style="left:502.14px;top:198.8px;width:0.8px;height:1px;background:#4a4e52"></div><div style="left:518.82px;top:198.8px;width:0.8px;height:1px;background:#4a4e52"></div><div class="t" style="left:527.56px;top:194.2px;font-size:8px;line-height:10px;color:#c9cbcd;transform:translateX(-50%);">11</div><div style="left:543.74px;top:198.4px;width:1px;height:1.8px;background:#6a6e72"></div><div style="left:535.5px;top:198.8px;width:0.8px;height:1px;background:#4a4e52"></div><div style="left:552.18px;top:198.8px;width:0.8px;height:1px;background:#4a4e52"></div><div class="t" style="left:560.92px;top:194.2px;font-size:8px;line-height:10px;color:#c9cbcd;transform:translateX(-50%);">12</div><div style="left:577.1px;top:198.4px;width:1px;height:1.8px;background:#6a6e72"></div><div style="left:568.86px;top:198.8px;width:0.8px;height:1px;background:#4a4e52"></div><div style="left:585.54px;top:198.8px;width:0.8px;height:1px;background:#4a4e52"></div><div class="t" style="left:594.28px;top:194.2px;font-size:8px;line-height:10px;color:#c9cbcd;transform:translateX(-50%);">13</div><div style="left:610.46px;top:198.4px;width:1px;height:1.8px;background:#6a6e72"></div><div style="left:602.22px;top:198.8px;width:0.8px;height:1px;background:#4a4e52"></div><div style="left:618.9px;top:198.8px;width:0.8px;height:1px;background:#4a4e52"></div><div class="t" style="left:627.64px;top:194.2px;font-size:8px;line-height:10px;color:#c9cbcd;transform:translateX(-50%);">14</div><div style="left:643.82px;top:198.4px;width:1px;height:1.8px;background:#6a6e72"></div><div style="left:635.58px;top:198.8px;width:0.8px;height:1px;background:#4a4e52"></div><div style="left:652.26px;top:198.8px;width:0.8px;height:1px;background:#4a4e52"></div><div class="t" style="left:661px;top:194.2px;font-size:8px;line-height:10px;color:#c9cbcd;transform:translateX(-50%);">15</div><div style="left:677.18px;top:198.4px;width:1px;height:1.8px;background:#6a6e72"></div><div style="left:668.94px;top:198.8px;width:0.8px;height:1px;background:#4a4e52"></div><div style="left:685.62px;top:198.8px;width:0.8px;height:1px;background:#4a4e52"></div><div class="t" style="left:694.36px;top:194.2px;font-size:8px;line-height:10px;color:#c9cbcd;transform:translateX(-50%);">16</div><div style="left:710.54px;top:198.4px;width:1px;height:1.8px;background:#6a6e72"></div><div style="left:702.3px;top:198.8px;width:0.8px;height:1px;background:#4a4e52"></div><div style="left:718.98px;top:198.8px;width:0.8px;height:1px;background:#4a4e52"></div><div style="left:743.9px;top:198.4px;width:1px;height:1.8px;background:#6a6e72"></div><div style="left:735.66px;top:198.8px;width:0.8px;height:1px;background:#4a4e52"></div><div style="left:752.34px;top:198.8px;width:0.8px;height:1px;background:#4a4e52"></div><div class="t" style="left:761.08px;top:194.2px;font-size:8px;line-height:10px;color:#c9cbcd;transform:translateX(-50%);">18</div><div style="left:777.26px;top:198.4px;width:1px;height:1.8px;background:#6a6e72"></div><div style="left:769.02px;top:198.8px;width:0.8px;height:1px;background:#4a4e52"></div><div style="left:785.7px;top:198.8px;width:0.8px;height:1px;background:#4a4e52"></div><svg class="i" style="left:152.7px;top:190.7px;" width="17" height="17" viewBox="0 0 16 16"><path d="M3 1h10L9 8l4 7H3l4-7z" fill="#1b1e20" stroke="#e8eaec" stroke-width="1.400"/></svg><svg class="i" style="left:721.92px;top:198.2px;" width="10" height="10" viewBox="0 0 16 16"><path d="M3 14h10V9L8 4 3 9z" fill="#1b1e20" stroke="#e8eaec" stroke-width="1.800"/></svg><div style="left:231.8px;top:205.2px;width:2.8px;height:1.6px;background:#a5a8ab"></div><div style="left:305.1px;top:205.2px;width:2.8px;height:1.6px;background:#a5a8ab"></div><div style="left:378.4px;top:205.2px;width:2.8px;height:1.6px;background:#a5a8ab"></div><div style="left:451.7px;top:205.2px;width:2.8px;height:1.6px;background:#a5a8ab"></div><div style="left:525px;top:205.2px;width:2.8px;height:1.6px;background:#a5a8ab"></div><div style="left:598.3px;top:205.2px;width:2.8px;height:1.6px;background:#a5a8ab"></div><div style="left:671.6px;top:205.2px;width:2.8px;height:1.6px;background:#a5a8ab"></div><svg class="i" style="left:793px;top:194.8px;" width="8.8" height="8.8" viewBox="0 0 16 16"><path d="M4 2.500l8 5.500-8 5.500z" fill="#d5d7d9"/></svg><div style="left:803.2px;top:190px;width:26.8px;height:18px;overflow:hidden"><div class="t" style="left:0.6px;top:3.22px;font-size:9.2px;line-height:11.96px;color:#a9acaf;">Comments</div></div>
<div style="left:847px;top:189.2px;width:361px;height:644.4px;background:#2a2e32"></div><div style="left:846.4px;top:189.2px;width:1.6px;height:644.4px;background:#17191b"></div><div style="left:846.6px;top:467px;width:5.6px;height:57.2px;background:#fcfcfc"></div><div style="left:848.4px;top:494.4px;width:2px;height:2px;background:#222;border-radius:50%"></div><div style="left:854.4px;top:197.6px;width:1.4px;height:1.4px;background:#50545a"></div><div style="left:854.4px;top:200.3px;width:1.4px;height:1.4px;background:#50545a"></div><div style="left:854.4px;top:203px;width:1.4px;height:1.4px;background:#50545a"></div><div style="left:854.4px;top:205.7px;width:1.4px;height:1.4px;background:#50545a"></div><div style="left:854.4px;top:208.4px;width:1.4px;height:1.4px;background:#50545a"></div><div class="t" style="left:862.4px;top:195.15px;font-size:13px;line-height:16.9px;color:#fcfcfc;font-weight:bold;letter-spacing:-0.53px;">Manage Changes</div><div class="t" style="left:1153.4px;top:196.45px;font-size:11px;line-height:14.3px;color:#b9bcbf;transform:translateX(-50%);">?</div><svg class="i" style="left:1166.1px;top:199.5px;" width="9" height="9" viewBox="0 0 16 16"><path d="M3 6l5 5 5-5" fill="none" stroke="#54585c" stroke-width="1.800"/></svg><svg class="i" style="left:1187.5px;top:199.5px;" width="9" height="9" viewBox="0 0 16 16"><path d="M3.500 3.500l9 9M12.500 3.500l-9 9" fill="none" stroke="#3f4347" stroke-width="1.800"/></svg><div style="left:860.2px;top:223.2px;width:63.2px;height:25.6px;background:#2a2e32;border:1px solid #54595e;border-bottom:none;border-top:2px solid #3daee9;border-radius:3px 3px 0 0;box-sizing:border-box"></div><div class="t" style="left:891.6px;top:227.15px;font-size:13px;line-height:16.9px;color:#fcfcfc;transform:translateX(-50%);">List</div><div style="left:923.4px;top:225.2px;width:63.6px;height:22.6px;background:#202326;border-radius:0 3px 0 0"></div><div class="t" style="left:954.4px;top:227.95px;font-size:13px;line-height:16.9px;color:#eceded;transform:translateX(-50%);">Filter</div><div style="left:858.6px;top:247.8px;width:310.8px;height:295px;border:1px solid #54595e;box-sizing:border-box;border-radius:0 2px 2px 2px"></div><div style="left:861.6px;top:247px;width:60.8px;height:2.4px;background:#2a2e32"></div><div style="left:864px;top:253.6px;width:301px;height:228.4px;background:#1b1e20;box-shadow:0 0 0 1px #3a3f44"></div><div style="left:865px;top:254.4px;width:299px;height:17.6px;background:#2d5168"></div><div style="left:934.6px;top:254.4px;width:1.2px;height:17.6px;background:#4b7590"></div><div style="left:1078.8px;top:254.4px;width:1.2px;height:17.6px;background:#4b7590"></div><div class="t" style="left:867.2px;top:257.24px;font-size:10.4px;line-height:13.52px;color:#fcfcfc;">Action</div><div class="t" style="left:938px;top:257.24px;font-size:10.4px;line-height:13.52px;color:#fcfcfc;">Author</div><div class="t" style="left:1082.4px;top:257.24px;font-size:10.4px;line-height:13.52px;color:#fcfcfc;">Date</div><svg class="i" style="left:881px;top:277.1px;" width="10.4" height="10.4" viewBox="0 0 16 16"><path d="M4 4l8 8M12 4l-8 8" stroke="#d6202a" stroke-width="3.200"/></svg><div class="t" style="left:937.6px;top:274.24px;font-size:12.4px;line-height:16.12px;color:#fcfcfc;letter-spacing:-0.11px;">Heiko Tietze</div><div style="left:1082px;top:273.3px;width:82.8px;height:18px;overflow:hidden"><div class="t" style="left:0.4px;top:0.94px;font-size:12.4px;line-height:16.12px;color:#fcfcfc;letter-spacing:0.15px;">11.07.2024 11</div></div><svg class="i" style="left:880.4px;top:294.84px;" width="11.6" height="11.6" viewBox="0 0 16 16"><path d="M8 2.500v11M2.500 8h11" stroke="#45cc2a" stroke-width="3.400"/></svg><div class="t" style="left:937.6px;top:292.58px;font-size:12.4px;line-height:16.12px;color:#fcfcfc;letter-spacing:-0.11px;">Heiko Tietze</div><div style="left:1082px;top:291.64px;width:82.8px;height:18px;overflow:hidden"><div class="t" style="left:0.4px;top:0.94px;font-size:12.4px;line-height:16.12px;color:#fcfcfc;letter-spacing:0.15px;">11.07.2024 11</div></div><svg class="i" style="left:881px;top:313.78px;" width="10.4" height="10.4" viewBox="0 0 16 16"><path d="M4 4l8 8M12 4l-8 8" stroke="#d6202a" stroke-width="3.200"/></svg><div class="t" style="left:937.6px;top:310.92px;font-size:12.4px;line-height:16.12px;color:#fcfcfc;letter-spacing:-0.38px;">John Doe</div><div style="left:1082px;top:309.98px;width:82.8px;height:18px;overflow:hidden"><div class="t" style="left:0.4px;top:0.94px;font-size:12.4px;line-height:16.12px;color:#fcfcfc;letter-spacing:0.15px;">11.07.2024 11</div></div><svg class="i" style="left:880.4px;top:331.52px;" width="11.6" height="11.6" viewBox="0 0 16 16"><path d="M8 2.500v11M2.500 8h11" stroke="#45cc2a" stroke-width="3.400"/></svg><div class="t" style="left:937.6px;top:329.26px;font-size:12.4px;line-height:16.12px;color:#fcfcfc;letter-spacing:-0.38px;">John Doe</div><div style="left:1082px;top:328.32px;width:82.8px;height:18px;overflow:hidden"><div class="t" style="left:0.4px;top:0.94px;font-size:12.4px;line-height:16.12px;color:#fcfcfc;letter-spacing:0.15px;">11.07.2024 11</div></div><svg class="i" style="left:881px;top:350.46px;" width="10.4" height="10.4" viewBox="0 0 16 16"><path d="M4 4l8 8M12 4l-8 8" stroke="#d6202a" stroke-width="3.200"/></svg><div class="t" style="left:937.6px;top:347.6px;font-size:12.4px;line-height:16.12px;color:#fcfcfc;letter-spacing:-0.39px;">Jane Smith</div><div style="left:1082px;top:346.66px;width:82.8px;height:18px;overflow:hidden"><div class="t" style="left:0.4px;top:0.94px;font-size:12.4px;line-height:16.12px;color:#fcfcfc;letter-spacing:0.15px;">11.07.2024 11</div></div><svg class="i" style="left:880.4px;top:368.2px;" width="11.6" height="11.6" viewBox="0 0 16 16"><path d="M8 2.500v11M2.500 8h11" stroke="#45cc2a" stroke-width="3.400"/></svg><div class="t" style="left:937.6px;top:365.94px;font-size:12.4px;line-height:16.12px;color:#fcfcfc;letter-spacing:-0.39px;">Jane Smith</div><div style="left:1082px;top:365px;width:82.8px;height:18px;overflow:hidden"><div class="t" style="left:0.4px;top:0.94px;font-size:12.4px;line-height:16.12px;color:#fcfcfc;letter-spacing:0.15px;">11.07.2024 11</div></div><svg class="i" style="left:880.4px;top:386.54px;" width="11.6" height="11.6" viewBox="0 0 16 16"><path d="M8 2.500v11M2.500 8h11" stroke="#45cc2a" stroke-width="3.400"/></svg><div class="t" style="left:937.6px;top:384.28px;font-size:12.4px;line-height:16.12px;color:#fcfcfc;letter-spacing:-0.38px;">John Doe</div><div style="left:1082px;top:383.34px;width:82.8px;height:18px;overflow:hidden"><div class="t" style="left:0.4px;top:0.94px;font-size:12.4px;line-height:16.12px;color:#fcfcfc;letter-spacing:0.15px;">11.07.2024 11</div></div><svg class="i" style="left:880.4px;top:404.88px;" width="11.6" height="11.6" viewBox="0 0 16 16"><path d="M8 2.500v11M2.500 8h11" stroke="#45cc2a" stroke-width="3.400"/></svg><div class="t" style="left:937.6px;top:402.62px;font-size:12.4px;line-height:16.12px;color:#fcfcfc;letter-spacing:-0.38px;">John Doe</div><div style="left:1082px;top:401.68px;width:82.8px;height:18px;overflow:hidden"><div class="t" style="left:0.4px;top:0.94px;font-size:12.4px;line-height:16.12px;color:#fcfcfc;letter-spacing:0.15px;">11.07.2024 11</div></div><svg class="i" style="left:880.4px;top:423.22px;" width="11.6" height="11.6" viewBox="0 0 16 16"><path d="M8 2.500v11M2.500 8h11" stroke="#45cc2a" stroke-width="3.400"/></svg><div class="t" style="left:937.6px;top:420.96px;font-size:12.4px;line-height:16.12px;color:#fcfcfc;letter-spacing:-0.38px;">John Doe</div><div style="left:1082px;top:420.02px;width:82.8px;height:18px;overflow:hidden"><div class="t" style="left:0.4px;top:0.94px;font-size:12.4px;line-height:16.12px;color:#fcfcfc;letter-spacing:0.15px;">11.07.2024 11</div></div><svg class="i" style="left:880.4px;top:441.56px;" width="11.6" height="11.6" viewBox="0 0 16 16"><path d="M8 2.500v11M2.500 8h11" stroke="#45cc2a" stroke-width="3.400"/></svg><div class="t" style="left:937.6px;top:439.3px;font-size:12.4px;line-height:16.12px;color:#fcfcfc;letter-spacing:-0.38px;">John Doe</div><div style="left:1082px;top:438.36px;width:82.8px;height:18px;overflow:hidden"><div class="t" style="left:0.4px;top:0.94px;font-size:12.4px;line-height:16.12px;color:#fcfcfc;letter-spacing:0.15px;">11.07.2024 11</div></div><div style="left:864px;top:485px;width:301px;height:12px;background:#2a2e32"></div><div style="left:869px;top:488.8px;width:185.6px;height:6px;background:#53575b;border-radius:1.500px"></div><div style="left:866.6px;top:509.8px;width:71.4px;height:26.6px;background:#31363b;border:1px solid #5b6065;border-radius:2.500px;box-sizing:border-box"></div><div class="t" style="left:902.3px;top:515.56px;font-size:11.6px;line-height:15.08px;color:#fcfcfc;transform:translateX(-50%);"><span style='text-decoration:underline'>A</span>ccept</div><div style="left:942px;top:509.8px;width:70.8px;height:26.6px;background:#31363b;border:1px solid #5b6065;border-radius:2.500px;box-sizing:border-box"></div><div class="t" style="left:977.4px;top:515.56px;font-size:11.6px;line-height:15.08px;color:#fcfcfc;transform:translateX(-50%);"><span style='text-decoration:underline'>R</span>eject</div><div style="left:1017.6px;top:509.8px;width:71.4px;height:26.6px;background:#31363b;border:1px solid #5b6065;border-radius:2.500px;box-sizing:border-box"></div><div class="t" style="left:1053.3px;top:515.56px;font-size:11.6px;line-height:15.08px;color:#fcfcfc;transform:translateX(-50%);">A<span style='text-decoration:underline'>c</span>cept All</div><div style="left:1093px;top:509.8px;width:70.8px;height:26.6px;background:#31363b;border:1px solid #5b6065;border-radius:2.500px;box-sizing:border-box"></div><div class="t" style="left:1128.4px;top:515.56px;font-size:11.6px;line-height:15.08px;color:#fcfcfc;transform:translateX(-50%);">R<span style='text-decoration:underline'>e</span>ject All</div><div class="t" style="left:861.8px;top:551.66px;font-size:11.6px;line-height:15.08px;color:#fcfcfc;font-weight:bold">Collaboration</div><div style="left:856px;top:572.4px;width:308px;height:202px;background:#1b1d1f"></div><div class="t" style="left:869.8px;top:587.43px;font-size:9.8px;line-height:12.74px;color:#fcfcfc;font-weight:bold">Heiko Tietze</div><div style="left:945.4px;top:582px;width:20.8px;height:20.8px;background:#2f6bff;border-radius:50%"></div><div class="t" style="left:869.8px;top:610.63px;font-size:9.8px;line-height:12.74px;color:#fcfcfc;font-weight:bold">John Doe</div><div style="left:945.4px;top:605.2px;width:20.8px;height:20.8px;background:#ff8e5e;border-radius:50%"></div><div class="t" style="left:869.8px;top:634.03px;font-size:9.8px;line-height:12.74px;color:#fcfcfc;font-weight:bold">Jane Smith</div><div style="left:945.4px;top:628.6px;width:20.8px;height:20.8px;background:#2dc414;border-radius:50%"></div><div style="left:1078.6px;top:783px;width:85px;height:26.2px;background:#34373a;border:1px solid #777b7f;box-sizing:border-box"></div><div class="t" style="left:1121.2px;top:789.18px;font-size:10.8px;line-height:14.04px;color:#fcfcfc;transform:translateX(-50%);">Add</div><div style="left:1177.2px;top:407.2px;width:26.8px;height:27.2px;background:#3d4247;border-radius:3px;box-shadow:inset 0 0 0 1px #50555a"></div><svg class="i" style="left:1180.9px;top:214.9px;" width="19.4" height="19.4" viewBox="0 0 16 16"><path d="M2 14.500l7-7" stroke="#c9cbcd" stroke-width="2.400" stroke-linecap="round"/><path d="M9 3.500a3.600 3.600 0 0 1 4.500-1.800L11.300 4l1 1.800 2.300-.4A3.600 3.600 0 0 1 9 8z" fill="#e6e8ea"/></svg><svg class="i" style="left:1180.9px;top:243.1px;" width="19.4" height="19.4" viewBox="0 0 16 16"><path d="M1.500 3h13v11h-13z" fill="#f2c83a"/><path d="M2.500 5l10 8h-10z" fill="#fbf3cf"/><path d="M1.500 3h13v1.500h-13z" fill="#fff1a8"/></svg><svg class="i" style="left:1180.9px;top:271.1px;" width="19.4" height="19.4" viewBox="0 0 16 16"><rect x="1.500" y="2" width="13" height="12.500" fill="#4d82d6"/><rect x="1.500" y="2" width="13" height="3" fill="#9ec0f0"/><rect x="4" y="7" width="3" height="5" fill="#e23b2e"/><rect x="9" y="7" width="3.500" height="5" fill="#dfe7f5"/></svg><svg class="i" style="left:1180.9px;top:299.3px;" width="19.4" height="19.4" viewBox="0 0 16 16"><circle cx="8" cy="8" r="6.800" fill="#e9eef5"/><circle cx="8" cy="8" r="5.300" fill="#3b7fe6"/><path d="M11.500 4.500L9 9 4.500 11.500 7 7z" fill="#fbfbfb"/><path d="M11.500 4.500L9 9 7 7z" fill="#e0281e"/></svg><svg class="i" style="left:1180.9px;top:326.3px;" width="19.4" height="19.4" viewBox="0 0 16 16"><path d="M3 1.500h10v10l-3.500 3.500H3z" fill="#f6f6f6"/><path d="M13 11.500H9.500V15z" fill="#bfc3c7"/></svg><svg class="i" style="left:1180.9px;top:355.5px;" width="19.4" height="19.4" viewBox="0 0 16 16"><path d="M1.500 3h13v11h-13z" fill="#f2c83a"/><path d="M2.500 5l10 8h-10z" fill="#fbf3cf"/><path d="M1.500 3h13v1.500h-13z" fill="#fff1a8"/></svg><svg class="i" style="left:1180.9px;top:383.7px;" width="19.4" height="19.4" viewBox="0 0 16 16"><path d="M2 3h11v10H2z" fill="#f2c83a"/><path d="M3 5l8 7H3z" fill="#fbf3cf"/><circle cx="8.500" cy="7" r="3.800" fill="#dfe9f5" stroke="#8a8e92" stroke-width="1.200"/><path d="M11.200 10l3.500 4" stroke="#8a8e92" stroke-width="2"/></svg><svg class="i" style="left:1180.9px;top:411.1px;" width="19.4" height="19.4" viewBox="0 0 16 16"><path d="M2.500 2h10.500v9l-3 3.500H2.500z" fill="#f7f7f7"/><path d="M13 11h-3v3.500z" fill="#cfcfcf"/><path d="M4 9h6" stroke="#e35d1d" stroke-width="1"/><path d="M8.5 7.5L14.2 1.5" stroke="#f08a2c" stroke-width="2.2" stroke-linecap="round"/><path d="M7.3 8.7l2.2 -.6l-1.6 -1.6z" fill="#5a4020"/></svg><svg class="i" style="left:1180.9px;top:439.9px;" width="19.4" height="19.4" viewBox="0 0 16 16"><path d="M3 1h8l2.500 2.500V14H3z" fill="#f6f6f6"/><circle cx="10.500" cy="11" r="4.200" fill="#2f6fe0"/><circle cx="10.500" cy="8.800" r=".9" fill="#fff"/><path d="M8.300 10.300h4.400M10.500 10.300v2l-1.200 1.700M10.500 12.300l1.200 1.700" stroke="#fff" stroke-width=".8" fill="none"/></svg>
<div style="left:58px;top:802.4px;width:789px;height:31.2px;background:#2a2e32"></div><div style="left:62.8px;top:805.2px;width:32.6px;height:26px;background:#3d4247;border-radius:3px;box-shadow:inset 0 0 0 1px #50555a"></div><div style="left:85px;top:805.2px;width:1px;height:26px;background:#50555a"></div><div style="left:98.4px;top:805.2px;width:24.8px;height:26px;background:#3d4247;border-radius:3px;box-shadow:inset 0 0 0 1px #50555a"></div><svg class="i" style="left:63.1px;top:808.7px;" width="19.4" height="19.4" viewBox="0 0 16 16"><path d="M2.500 2.500h10.500v8.500l-3 3.500H2.500z" fill="#f1f1f1"/><path d="M13 11h-3v3.500z" fill="#c4c4c4"/><path d="M4 8.500h5" stroke="#e35d1d" stroke-width="1"/><circle cx="4.500" cy="4.500" r="1.800" fill="#3b7fe6"/><path d="M8.5 7.5L14 1.8" stroke="#f08a2c" stroke-width="2.2" stroke-linecap="round"/><path d="M7.3 8.7l2.2 -.6l-1.6 -1.6z" fill="#5a4020"/></svg><svg class="i" style="left:101.1px;top:808.7px;" width="19.4" height="19.4" viewBox="0 0 16 16"><path d="M2.500 2.500h10.500v8.500l-3 3.500H2.500z" fill="#f1f1f1"/><path d="M13 11h-3v3.500z" fill="#c4c4c4"/><path d="M4 8.500h5" stroke="#e35d1d" stroke-width="1"/><circle cx="10.500" cy="12" r="2.400" fill="#e0281e"/><path d="M8.5 7.5L14 1.8" stroke="#f08a2c" stroke-width="2.2" stroke-linecap="round"/><path d="M7.3 8.7l2.2 -.6l-1.6 -1.6z" fill="#5a4020"/></svg><svg class="i" style="left:132.3px;top:808.7px;" width="19.4" height="19.4" viewBox="0 0 16 16"><path d="M2.500 2.500h10.500v8.500l-3 3.500H2.500z" fill="#f1f1f1"/><path d="M13 11h-3v3.500z" fill="#c4c4c4"/><path d="M3 3l3 3" stroke="#2fb52f" stroke-width="1.600"/><path d="M4 9h5" stroke="#e35d1d" stroke-width="1"/><path d="M8.5 7.5L14 1.8" stroke="#f08a2c" stroke-width="2.2" stroke-linecap="round"/><path d="M7.3 8.7l2.2 -.6l-1.6 -1.6z" fill="#5a4020"/></svg><svg class="i" style="left:159.7px;top:808.7px;" width="19.4" height="19.4" viewBox="0 0 16 16"><path d="M2.500 2.500h10.500v8.500l-3 3.500H2.500z" fill="#f1f1f1"/><path d="M13 11h-3v3.500z" fill="#c4c4c4"/><path d="M3 6l3-3" stroke="#2fb52f" stroke-width="1.600"/><path d="M4 9h5" stroke="#e35d1d" stroke-width="1"/><path d="M8.5 7.5L14 1.8" stroke="#f08a2c" stroke-width="2.2" stroke-linecap="round"/><path d="M7.3 8.7l2.2 -.6l-1.6 -1.6z" fill="#5a4020"/></svg><svg class="i" style="left:186.3px;top:808.7px;" width="19.4" height="19.4" viewBox="0 0 16 16"><path d="M2.500 3h10.500v8l-3 3.500H2.500z" fill="#9a9ea2"/><path d="M13 11h-3v3.500z" fill="#5d6165"/><path d="M7 1.500l7 1.500-5 4z" fill="#b3b7bb"/></svg><svg class="i" style="left:212.3px;top:808.7px;" width="19.4" height="19.4" viewBox="0 0 16 16"><path d="M2.500 3h10.500v8l-3 3.500H2.500z" fill="#969a9e"/><path d="M13 11h-3v3.500z" fill="#5d6165"/><path d="M3 1l9 2-5 4z" fill="#b3b7bb"/></svg><svg class="i" style="left:238.3px;top:808.7px;" width="19.4" height="19.4" viewBox="0 0 16 16"><path d="M2.500 2.500h10.500v8.500l-3 3.500H2.500z" fill="#f1f1f1"/><path d="M13 11h-3v3.500z" fill="#c4c4c4"/><path d="M3 7l2.500 3L10 4" stroke="#2fb52f" stroke-width="2" fill="none"/><path d="M3 11l2 2 3-3.500" stroke="#2fb52f" stroke-width="1.400" fill="none"/><path d="M8.5 7.5L14 1.8" stroke="#f08a2c" stroke-width="2.2" stroke-linecap="round"/><path d="M7.3 8.7l2.2 -.6l-1.6 -1.6z" fill="#5a4020"/></svg><svg class="i" style="left:264.3px;top:808.7px;" width="19.4" height="19.4" viewBox="0 0 16 16"><path d="M2.500 2.500h10.500v8.500l-3 3.500H2.500z" fill="#f1f1f1"/><path d="M13 11h-3v3.500z" fill="#c4c4c4"/><path d="M3 4l4 4M7 4L3 8M3.500 10l3 3M6.500 10l-3 3" stroke="#d12a1e" stroke-width="1.500"/><path d="M8.5 7.5L14 1.8" stroke="#f08a2c" stroke-width="2.2" stroke-linecap="round"/><path d="M7.3 8.7l2.2 -.6l-1.6 -1.6z" fill="#5a4020"/></svg><svg class="i" style="left:291.5px;top:808.7px;" width="19.4" height="19.4" viewBox="0 0 16 16"><path d="M2.500 3h10.500v8l-3 3.500H2.500z" fill="#9a9ea2"/><path d="M13 11h-3v3.500z" fill="#5d6165"/><path d="M7 1.500l7 1.500-5 4z" fill="#b3b7bb"/></svg><svg class="i" style="left:317.9px;top:808.7px;" width="19.4" height="19.4" viewBox="0 0 16 16"><path d="M2.500 3h10.500v8l-3 3.500H2.500z" fill="#969a9e"/><path d="M13 11h-3v3.500z" fill="#5d6165"/><path d="M3 1l9 2-5 4z" fill="#b3b7bb"/></svg><svg class="i" style="left:344.3px;top:808.7px;" width="19.4" height="19.4" viewBox="0 0 16 16"><path d="M2.500 2.500h10.500v8.500l-3 3.500H2.500z" fill="#f1f1f1"/><path d="M13 11h-3v3.500z" fill="#c4c4c4"/><path d="M4 8.500h6" stroke="#e35d1d" stroke-width="1"/><rect x="8" y="9.500" width="5" height="5" fill="#b9bdc1"/><path d="M8.5 7.5L14 1.8" stroke="#f08a2c" stroke-width="2.2" stroke-linecap="round"/><path d="M7.3 8.7l2.2 -.6l-1.6 -1.6z" fill="#5a4020"/></svg><svg class="i" style="left:375.9px;top:808.7px;" width="19.4" height="19.4" viewBox="0 0 16 16"><rect x="1" y="1.500" width="14" height="12.500" fill="#f9de55"/><rect x="1" y="1.500" width="14" height="2" fill="#fff09a"/><path d="M11.500 8v3H8.500v2h3v3h2v-3h3v-2h-3V8z" fill="#2fb52f" transform="translate(-1.500 -1.200)"/></svg><svg class="i" style="left:403.5px;top:808.7px;" width="19.4" height="19.4" viewBox="0 0 16 16"><path d="M2.500 3h10.500v8l-3 3.500H2.500z" fill="#a6aaae"/><path d="M13 11h-3v3.500z" fill="#55595d"/></svg><svg class="i" style="left:434.1px;top:808.7px;" width="19.4" height="19.4" viewBox="0 0 16 16"><path d="M2.500 2.500h10.500v8.500l-3 3.500H2.500z" fill="#f1f1f1"/><path d="M13 11h-3v3.500z" fill="#c4c4c4"/><rect x="3.500" y="6" width="6" height="5" fill="#f0a020"/><path d="M4.800 6V4.500a1.700 1.700 0 0 1 3.400 0V6" stroke="#c9861a" stroke-width="1" fill="none"/><path d="M8.5 7.5L14 1.8" stroke="#f08a2c" stroke-width="2.2" stroke-linecap="round"/><path d="M7.3 8.7l2.2 -.6l-1.6 -1.6z" fill="#5a4020"/></svg><svg class="i" style="left:462.3px;top:808.7px;" width="19.4" height="19.4" viewBox="0 0 16 16"><path d="M2 2h8l2 2v9H2z" fill="#dfe3ea"/><path d="M5 4h8l2 2v9H5z" fill="#c5d6f2"/></svg><svg class="i" style="left:490.3px;top:808.7px;" width="19.4" height="19.4" viewBox="0 0 16 16"><path d="M2 3c5 0 5 5 8 5M2 13c5 0 5-5 8-5h4" stroke="#29a9e0" stroke-width="2" fill="none"/><path d="M11 4.500l4 3.500-4 3.500z" fill="#29a9e0"/></svg><svg class="i" style="left:83.8px;top:812.4px;" width="13.2" height="13.2" viewBox="0 0 16 16"><path d="M4.5 6.5h7L8 10.5z" fill="#fcfcfc"/></svg><div style="left:131px;top:808px;width:1px;height:20px;background:#4b5055"></div><div style="left:368px;top:808px;width:1px;height:20px;background:#4b5055"></div><div style="left:428.8px;top:808px;width:1px;height:20px;background:#4b5055"></div><div style="left:58px;top:833.6px;width:1150px;height:20.4px;background:#2a2e32;border-top:1px solid #3a3f44"></div><svg class="i" style="left:64.4px;top:838.6px;" width="13.6" height="13.6" viewBox="0 0 16 16"><path d="M1.500 1.500h13v13h-13z" fill="none" stroke="#d1456b" stroke-width="1.500"/><rect x="4" y="2" width="7" height="4.500" fill="#d1456b"/><rect x="4.500" y="9.500" width="7" height="5" fill="none" stroke="#d1456b" stroke-width="1.200"/></svg><div class="t" style="left:91.2px;top:838.64px;font-size:10.4px;line-height:13.52px;color:#d0d2d4;letter-spacing:-0.44px;">Page 1 of 3</div><div class="t" style="left:192.8px;top:838.64px;font-size:10.4px;line-height:13.52px;color:#d0d2d4;letter-spacing:-0.23px;">510 words, 2,631 characters</div><div class="t" style="left:413px;top:838.64px;font-size:10.4px;line-height:13.52px;color:#d0d2d4;letter-spacing:-0.3px;">Default Page Style</div><div class="t" style="left:569.8px;top:838.64px;font-size:10.4px;line-height:13.52px;color:#d0d2d4;letter-spacing:-0.26px;">German (Germany)</div><div style="left:744.8px;top:841.4px;width:12.8px;height:6.8px;background:#c5c7c9;border-radius:1px"></div><div style="left:764px;top:838.6px;width:1.2px;height:12.4px;background:#b5b7b9"></div><div style="left:762px;top:838.6px;width:5.2px;height:1px;background:#b5b7b9"></div><div style="left:762px;top:850px;width:5.2px;height:1px;background:#b5b7b9"></div><svg class="i" style="left:988.4px;top:837.8px" width="9.2" height="14" viewBox="0 0 10 14" preserveAspectRatio="none"><path d="M1 1h8v8.500L6 13H1z" fill="none" stroke="#c3c5c7" stroke-width="1.500"/></svg><div style="left:1004.4px;top:836.6px;width:22.4px;height:16px;background:#1f4f7a;border-radius:1.500px"></div><svg class="i" style="left:1006px;top:837.8px" width="9.2" height="14" viewBox="0 0 10 14" preserveAspectRatio="none"><path d="M1 1h8v8.500L6 13H1z" fill="none" stroke="#5db8f2" stroke-width="1.500"/></svg><svg class="i" style="left:1016px;top:837.8px" width="9.2" height="14" viewBox="0 0 10 14" preserveAspectRatio="none"><path d="M1 1h8v8.500L6 13H1z" fill="none" stroke="#5db8f2" stroke-width="1.500"/></svg><svg class="i" style="left:1029.2px;top:837.8px" width="10" height="14" viewBox="0 0 10 14" preserveAspectRatio="none"><path d="M1 1h8v8.500L6 13H1z" fill="none" stroke="#c3c5c7" stroke-width="1.500"/></svg><svg class="i" style="left:1038.8px;top:837.8px" width="10" height="14" viewBox="0 0 10 14" preserveAspectRatio="none"><path d="M1 1h8v8.500L6 13H1z" fill="none" stroke="#c3c5c7" stroke-width="1.500"/></svg><svg class="i" style="left:1058px;top:841px;" width="8.8" height="8.8" viewBox="0 0 16 16"><circle cx="8" cy="8" r="6" fill="#d5d7d9"/><path d="M4.500 8h7" stroke="#2a2e32" stroke-width="2"/></svg><div style="left:1070px;top:844.6px;width:80px;height:1.6px;background:#d5d7d9"></div><div style="left:1089.6px;top:843px;width:1.2px;height:4.8px;background:#c9cbcd"></div><div style="left:1110px;top:841px;width:2.8px;height:8.8px;background:#fcfcfc;border-radius:.6px"></div><svg class="i" style="left:1153.4px;top:841px;" width="8.8" height="8.8" viewBox="0 0 16 16"><circle cx="8" cy="8" r="6" fill="#d5d7d9"/><path d="M4.500 8h7M8 4.500v7" stroke="#2a2e32" stroke-width="2"/></svg><div class="t" style="left:1175px;top:838.64px;font-size:10.4px;line-height:13.52px;color:#d0d2d4;letter-spacing:-0.61px;">110%</div>
<div style="left:291.4px;top:505.2px;width:379px;height:220.6px;background:#efebe7;box-shadow:0 0 0 .5px #0e4a6e, 0 1px 4px rgba(0,0,0,.35)"></div><div style="left:291.4px;top:505.2px;width:379px;height:20.8px;background:linear-gradient(#1f78ab,#155f8b)"></div><div style="left:291.4px;top:526px;width:2.6px;height:199.8px;background:#2c7fb0"></div><div style="left:667.8px;top:526px;width:2.6px;height:199.8px;background:#2c7fb0"></div><div style="left:291.4px;top:723.2px;width:379px;height:2.6px;background:#2c7fb0"></div><div style="left:294px;top:526px;width:373.8px;height:1.6px;background:#fbfaf8"></div><div class="t" style="left:481px;top:507.98px;font-size:10.8px;line-height:14.04px;color:#fff;transform:translateX(-50%);font-weight:bold">Untitled Frame</div><div style="left:304.2px;top:540.4px;width:356px;height:143.6px;background:#8f8f8f"></div><div style="left:643.4px;top:540.4px;width:17px;height:25px;background:#efebe7"></div><div style="left:305.4px;top:541.6px;width:64.2px;height:22.8px;background:#e0e0e0;overflow:hidden"><div class="t" style="left:3.8px;top:7.12px;font-size:9.5px;line-height:12.35px;color:#1f1f1f;letter-spacing:-.14px">Name</div></div><div style="left:370.6px;top:541.6px;width:90.4px;height:22.8px;background:#e0e0e0;overflow:hidden"><div class="t" style="left:3.8px;top:7.12px;font-size:9.5px;line-height:12.35px;color:#1f1f1f;letter-spacing:-.14px">E-Mail</div></div><div style="left:462px;top:541.6px;width:119.4px;height:22.8px;background:#e0e0e0;overflow:hidden"><div class="t" style="left:3.8px;top:7.12px;font-size:9.5px;line-height:12.35px;color:#1f1f1f;letter-spacing:-.14px">Matrix</div></div><div style="left:582.4px;top:541.6px;width:60px;height:22.8px;background:#e0e0e0;overflow:hidden"><div class="t" style="left:3.8px;top:7.12px;font-size:9.5px;line-height:12.35px;color:#1f1f1f;letter-spacing:-.14px">Mobile</div></div><div style="left:305.4px;top:565.4px;width:64.2px;height:22.8px;background:#f1efeb;overflow:hidden"><div class="t" style="left:3.8px;top:7.13px;font-size:9.5px;line-height:12.35px;color:#1f1f1f;letter-spacing:-.14px">John Doe</div></div><div style="left:370.6px;top:565.4px;width:90.4px;height:22.8px;background:#c9c9c9;overflow:hidden"><div class="t" style="left:3.8px;top:7.13px;font-size:9.5px;line-height:12.35px;color:#1f1f1f;letter-spacing:-.14px">john@doe.com</div></div><div style="left:462px;top:565.4px;width:119.4px;height:22.8px;background:#c9c9c9;overflow:hidden"><div class="t" style="left:3.8px;top:7.13px;font-size:9.5px;line-height:12.35px;color:#1f1f1f;letter-spacing:-.14px">@johndoe:matrix.org</div></div><div style="left:582.4px;top:565.4px;width:60px;height:22.8px;background:#c9c9c9;overflow:hidden"><div class="t" style="left:3.8px;top:7.13px;font-size:9.5px;line-height:12.35px;color:#1f1f1f;letter-spacing:-.14px">+1 234567</div></div><div style="left:305.4px;top:589.2px;width:64.2px;height:22.8px;background:#f1efeb;overflow:hidden"><div class="t" style="left:3.8px;top:7.12px;font-size:9.5px;line-height:12.35px;color:#1f1f1f;letter-spacing:-.14px">Jane Smith</div></div><div style="left:370.6px;top:589.2px;width:90.4px;height:22.8px;background:#c9c9c9;overflow:hidden"><div class="t" style="left:3.8px;top:7.12px;font-size:9.5px;line-height:12.35px;color:#1f1f1f;letter-spacing:-.14px">jane@smithonian.org</div></div><div style="left:462px;top:589.2px;width:119.4px;height:22.8px;background:#c9c9c9;overflow:hidden"></div><div style="left:582.4px;top:589.2px;width:60px;height:22.8px;background:#c9c9c9;overflow:hidden"><div class="t" style="left:3.8px;top:7.12px;font-size:9.5px;line-height:12.35px;color:#1f1f1f;letter-spacing:-.14px">+2 345678</div></div><div style="left:305.4px;top:613px;width:64.2px;height:22.4px;background:#f1efeb;overflow:hidden"><div class="t" style="left:3.8px;top:6.92px;font-size:9.5px;line-height:12.35px;color:#1f1f1f;letter-spacing:-.14px">Alice</div></div><div style="left:370.6px;top:613px;width:90.4px;height:22.4px;background:#f5f3ef;overflow:hidden"></div><div style="left:462px;top:613px;width:119.4px;height:22.4px;background:#a9c9e9;overflow:hidden"><div class="t" style="left:3.8px;top:6.92px;font-size:9.5px;line-height:12.35px;color:#1f1f1f;letter-spacing:-.14px">@alice:documentfoundation.org</div></div><div style="left:582.4px;top:613px;width:60px;height:22.4px;background:#f5f3ef;overflow:hidden"></div><div style="left:305.4px;top:636.4px;width:64.2px;height:22.4px;background:#f1efeb;overflow:hidden"><div class="t" style="left:3.8px;top:6.92px;font-size:9.5px;line-height:12.35px;color:#1f1f1f;letter-spacing:-.14px">Bob</div></div><div style="left:370.6px;top:636.4px;width:90.4px;height:22.4px;background:#f5f3ef;overflow:hidden"></div><div style="left:462px;top:636.4px;width:119.4px;height:22.4px;background:#f5f3ef;overflow:hidden"></div><div style="left:582.4px;top:636.4px;width:60px;height:22.4px;background:#a9c9e9;overflow:hidden"><div class="t" style="left:3.8px;top:6.92px;font-size:9.5px;line-height:12.35px;color:#1f1f1f;letter-spacing:-.14px">+3 456789</div></div><div style="left:305.4px;top:659.8px;width:64.2px;height:22px;background:#f1efeb;overflow:hidden"><div class="t" style="left:3.8px;top:6.73px;font-size:9.5px;line-height:12.35px;color:#1f1f1f;letter-spacing:-.14px">Eve</div></div><div style="left:370.6px;top:659.8px;width:90.4px;height:22px;background:#a9c9e9;overflow:hidden"><div class="t" style="left:3.8px;top:6.73px;font-size:9.5px;line-height:12.35px;color:#1f1f1f;letter-spacing:-.14px">eve@free.com</div></div><div style="left:462px;top:659.8px;width:119.4px;height:22px;background:#a9c9e9;overflow:hidden"><div class="t" style="left:3.8px;top:6.73px;font-size:9.5px;line-height:12.35px;color:#1f1f1f;letter-spacing:-.14px">@eve:documentfoundation.org</div></div><div style="left:582.4px;top:659.8px;width:60px;height:22px;background:#f5f3ef;overflow:hidden"></div><div style="left:643.8px;top:565.4px;width:14px;height:116.8px;background:#f3f1ee"></div><div style="left:644.8px;top:566.4px;width:12.8px;height:23.2px;background:#c6c6c6;border:.5px solid #9a9a9a;box-sizing:border-box"></div><svg class="i" style="left:647.2px;top:673.2px;" width="8" height="8" viewBox="0 0 16 16"><path d="M3 6l5 5 5-5" fill="none" stroke="#8a8a8a" stroke-width="1.500"/></svg><div style="left:304.4px;top:695.4px;width:70.6px;height:17px;background:linear-gradient(#fdfdfc,#e9e6e2);border:1px solid #a9a6a2;border-radius:1.500px;box-sizing:border-box"></div><div class="t" style="left:339.7px;top:697.63px;font-size:9.8px;line-height:12.74px;color:#222;transform:translateX(-50%);">Help</div><div style="left:507px;top:695.4px;width:71px;height:17px;background:linear-gradient(#fdfdfc,#e9e6e2);border:1px solid #a9a6a2;border-radius:1.500px;box-sizing:border-box"></div><div class="t" style="left:542.5px;top:697.63px;font-size:9.8px;line-height:12.74px;color:#222;transform:translateX(-50%);">Invite</div><div style="left:587.4px;top:695.4px;width:71px;height:17px;background:linear-gradient(#fdfdfc,#e9e6e2);border:1px solid #a9a6a2;border-radius:1.500px;box-sizing:border-box"></div><div class="t" style="left:622.9px;top:697.63px;font-size:9.8px;line-height:12.74px;color:#222;transform:translateX(-50%);">Cancel</div>
<div class="yc" style="left:326.6px;top:405.8px;width:26px;height:26px;line-height:26px;">1</div>
<div class="yc" style="left:1054px;top:557.4px;width:25.2px;height:25.2px;line-height:25.2px;">2</div>
<div class="yc" style="left:437.4px;top:691.4px;width:26px;height:26px;line-height:26px;">3</div></div></body></html>
